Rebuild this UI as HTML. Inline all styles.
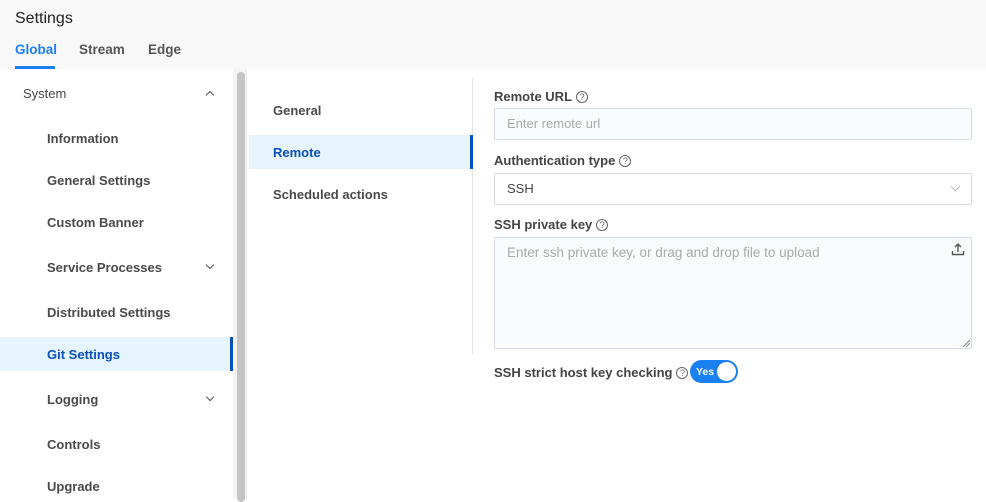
<!DOCTYPE html>
<html><head><style>
*{box-sizing:border-box;margin:0;padding:0}
body{width:986px;height:499px;overflow:hidden;background:#fff;font-family:"Liberation Sans",sans-serif;color:#444;position:relative}
.hdr{position:absolute;left:0;top:0;width:986px;height:69px;background:#f8f8f8}
.t{position:absolute;left:15px;top:10px;font-size:16px;color:#222}
.tab{position:absolute;top:42px;font-size:13.5px;font-weight:bold;color:#555}
.nav{position:absolute;left:47px;font-size:13px;font-weight:bold;color:#4a4a4a}
.chev{position:absolute;width:6px;height:6px;border-left:1.6px solid #555;border-top:1.6px solid #555}
.lbl{position:absolute;left:494px;font-size:13px;font-weight:bold;color:#444}
.q{display:inline-block;width:12px;height:12px;border:1px solid #666;border-radius:50%;font-size:9px;line-height:10px;text-align:center;font-weight:normal;margin-left:4px;vertical-align:1px;color:#666}
.inp{position:absolute;left:494px;width:478px;border:1px solid #d4dbe3;border-radius:2px;background:#fafbfc;font-size:13px;color:#aaa;padding-left:12px}
</style></head><body>
<div class="hdr">
<div class="t">Settings</div>
<div class="tab" style="left:15px;color:#1a7ff0">Global</div>
<div class="tab" style="left:79px">Stream</div>
<div class="tab" style="left:148px">Edge</div>
<div style="position:absolute;left:15px;top:66px;width:40px;height:3px;background:#1a7ff0"></div>
</div>
<div style="position:absolute;left:233px;top:69px;width:13px;height:430px;background:#f4f4f4"></div>
<div style="position:absolute;left:237px;top:72px;width:8px;height:430px;background:#c4c4c4;border-radius:4px"></div>
<div style="position:absolute;left:246px;top:69px;width:1px;height:430px;background:#e8e8e8"></div>
<div class="nav" style="left:23px;top:86px;font-weight:normal;color:#444">System</div>
<div class="chev" style="left:207px;top:92px;transform:rotate(45deg)"></div>
<div class="nav" style="top:131px">Information</div>
<div class="nav" style="top:173px">General Settings</div>
<div class="nav" style="top:215px">Custom Banner</div>
<div class="nav" style="top:260px">Service Processes</div>
<div class="chev" style="left:207px;top:262px;transform:rotate(225deg)"></div>
<div class="nav" style="top:305px">Distributed Settings</div>
<div style="position:absolute;left:0;top:337px;width:233px;height:34px;background:#e5f4fd"></div>
<div style="position:absolute;left:230px;top:337px;width:3px;height:34px;background:#0b4fbd"></div>
<div class="nav" style="top:347px;color:#0b4fbd">Git Settings</div>
<div class="nav" style="top:392px">Logging</div>
<div class="chev" style="left:207px;top:394px;transform:rotate(225deg)"></div>
<div class="nav" style="top:437px">Controls</div>
<div class="nav" style="top:479px">Upgrade</div>

<div style="position:absolute;left:472px;top:78px;width:1px;height:277px;background:#e5e5e5"></div>
<div class="nav" style="left:273px;top:103px">General</div>
<div style="position:absolute;left:249px;top:135px;width:224px;height:34px;background:#e5f4fd"></div>
<div style="position:absolute;left:470px;top:135px;width:3px;height:34px;background:#0b4fbd"></div>
<div class="nav" style="left:273px;top:145px;color:#0b4fbd">Remote</div>
<div class="nav" style="left:273px;top:187px">Scheduled actions</div>

<div class="lbl" style="top:89px">Remote URL<span class="q">?</span></div>
<div class="inp" style="top:108px;height:32px;line-height:30px">Enter remote url</div>
<div class="lbl" style="top:153px">Authentication type<span class="q">?</span></div>
<div class="inp" style="top:173px;height:32px;line-height:30px;background:#fff;color:#444">SSH</div>
<div class="chev" style="left:952px;top:183px;transform:rotate(225deg);border-color:#bbb;width:7px;height:7px;border-width:1px"></div>
<div class="lbl" style="top:217px">SSH private key<span class="q">?</span></div>
<div class="inp" style="top:237px;height:112px;padding-top:7px;font-size:13.5px">Enter ssh private key, or drag and drop file to upload</div>
<svg style="position:absolute;left:951px;top:242px" width="14" height="14" viewBox="0 0 14 14" fill="none" stroke="#555" stroke-width="1.4"><path d="M7 10V2M4 5l3-3 3 3M1.5 9v3.5h11V9"/></svg>
<svg style="position:absolute;left:962px;top:339px" width="8" height="8" stroke="#888" stroke-width="1"><path d="M1 8L8 1M4 8L8 4"/></svg>
<div class="lbl" style="top:365px">SSH strict host key checking<span class="q">?</span></div>
<div style="position:absolute;left:690px;top:360px;width:48px;height:23px;border-radius:12px;background:#1a7ff0"></div>
<div style="position:absolute;left:696px;top:366px;color:#fff;font-size:10.5px;font-weight:bold;line-height:12px">Yes</div>
<div style="position:absolute;left:717px;top:362px;width:19px;height:19px;border-radius:50%;background:#fff"></div>
</body></html>
